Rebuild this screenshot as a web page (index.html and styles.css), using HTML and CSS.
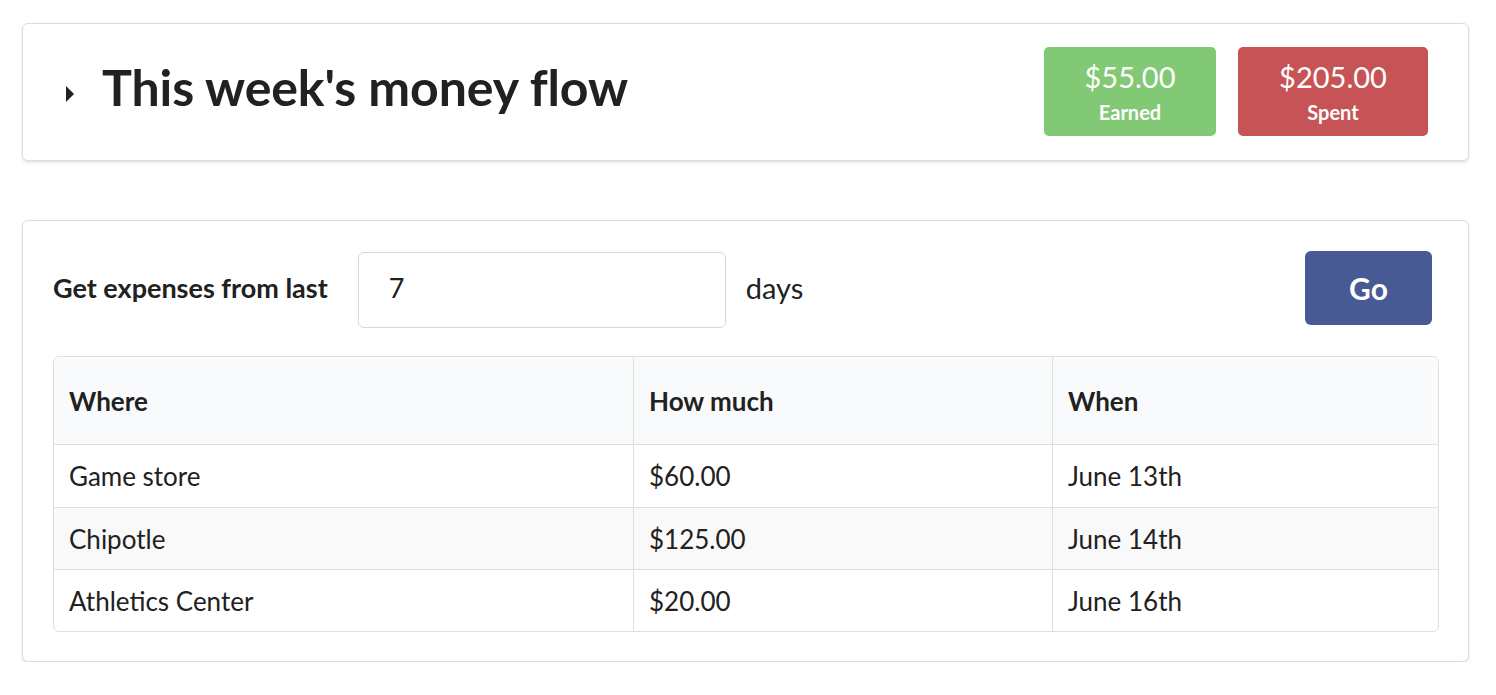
FILE: index.html
```html
<!DOCTYPE html>
<html>
<head>
<meta charset="utf-8">
<link rel="stylesheet" href="styles.css">
</head>
<body>
<div class="page">
  <div class="card header-card">
    <div class="title-wrap">
      <span class="caret"></span>
      <h1 class="title">This week's money flow</h1>
    </div>
    <div class="stats">
      <div class="stat earned">
        <div class="stat-value">$55.00</div>
        <div class="stat-label">Earned</div>
      </div>
      <div class="stat spent">
        <div class="stat-value">$205.00</div>
        <div class="stat-label">Spent</div>
      </div>
    </div>
  </div>

  <div class="card body-card">
    <div class="form-row">
      <label class="form-label">Get expenses from last</label>
      <div class="input-box">7</div>
      <span class="days">days</span>
      <button class="go">Go</button>
    </div>
    <table class="table">
      <thead>
        <tr><th class="c1">Where</th><th class="c2">How much</th><th class="c3">When</th></tr>
      </thead>
      <tbody>
        <tr><td>Game store</td><td>$60.00</td><td>June 13th</td></tr>
        <tr class="alt"><td>Chipotle</td><td>$125.00</td><td>June 14th</td></tr>
        <tr><td>Athletics Center</td><td>$20.00</td><td>June 16th</td></tr>
      </tbody>
    </table>
  </div>
</div>
</body>
</html>
```
FILE: styles.css
```css
* { box-sizing: border-box; }
html, body { margin: 0; padding: 0; background: #fff; }
body {
  font-family: Lato, "Open Sans", sans-serif;
  color: #212121;
}
.page {
  padding: 23px 27px 0 22px;
  display: flex;
  flex-direction: column;
  gap: 59px;
}
.card {
  background: #fff;
  border: 1px solid #dcdcdd;
  border-radius: 6px;
  box-shadow: 0 2px 3px 0 rgba(0,0,0,0.10);
}
.header-card {
  height: 138px;
  display: flex;
  align-items: center;
  justify-content: space-between;
  padding: 0 40px 0 43px;
}
.title-wrap {
  display: flex;
  align-items: flex-start;
  margin-bottom: 10px;
}
.caret {
  width: 0; height: 0;
  border-top: 8px solid transparent;
  border-bottom: 8px solid transparent;
  border-left: 8px solid #212121;
  margin-right: 28px;
  margin-top: 24px;
}
.title {
  margin: 0;
  font-size: 50px;
  font-weight: 700;
  letter-spacing: -0.1px;
  line-height: 50px;
}
.stats {
  display: flex;
  gap: 22px;
  margin-top: -2px;
}
.stat {
  height: 89px;
  border-radius: 5px;
  color: #fff;
  display: flex;
  flex-direction: column;
  align-items: center;
  padding-top: 13px;
}
.earned { background: #81c974; width: 172px; }
.spent { background: #c65456; width: 190px; }
.stat-value {
  font-size: 29px;
  line-height: 34px;
}
.stat-label {
  font-size: 20px;
  font-weight: 700;
  line-height: 24px;
  margin-top: 6px;
}
.body-card {
  height: 442px;
  padding: 31px 30px 0 30px;
}
.form-row {
  display: flex;
  align-items: center;
  height: 76px;
}
.form-label {
  font-size: 27px;
  font-weight: 700;
  margin-right: 30px;
  margin-bottom: 6px;
}
.input-box {
  width: 368px;
  height: 76px;
  border: 1px solid #d8d8d9;
  border-radius: 6px;
  font-size: 27px;
  padding-left: 30px;
  padding-bottom: 6px;
  display: flex;
  align-items: center;
}
.days {
  font-size: 29px;
  margin-left: 20px;
  margin-bottom: 6px;
}
.go {
  align-self: flex-start;
  margin-top: -1px;
  margin-left: auto;
  margin-right: 6px;
  width: 127px;
  height: 74px;
  border: none;
  border-radius: 6px;
  background: #485a93;
  color: #fff;
  font-family: Lato, sans-serif;
  font-size: 30px;
  font-weight: 700;
  padding: 0;
}
.table {
  margin-top: 28px;
  width: 1386px;
  border-collapse: separate;
  border-spacing: 0;
  border: 1px solid #dedede;
  border-radius: 6px;
  overflow: hidden;
  font-size: 26px;
}
.table th, .table td {
  text-align: left;
  padding: 0 15px;
}
.table th {
  background: #f9fafb;
  height: 88px;
  font-weight: 700;
  border-bottom: 1px solid #dedede;
}
.table td {
  height: 62px;
  border-top: 1px solid #dedede;
}
.table tbody tr:first-child td { border-top: none; height: 62px; }
.table th + th, .table td + td { border-left: 1px solid #dedede; }
.c1 { width: 579px; }
.c2 { width: 419px; }
.alt td { background: #f9f9f9; }
```
